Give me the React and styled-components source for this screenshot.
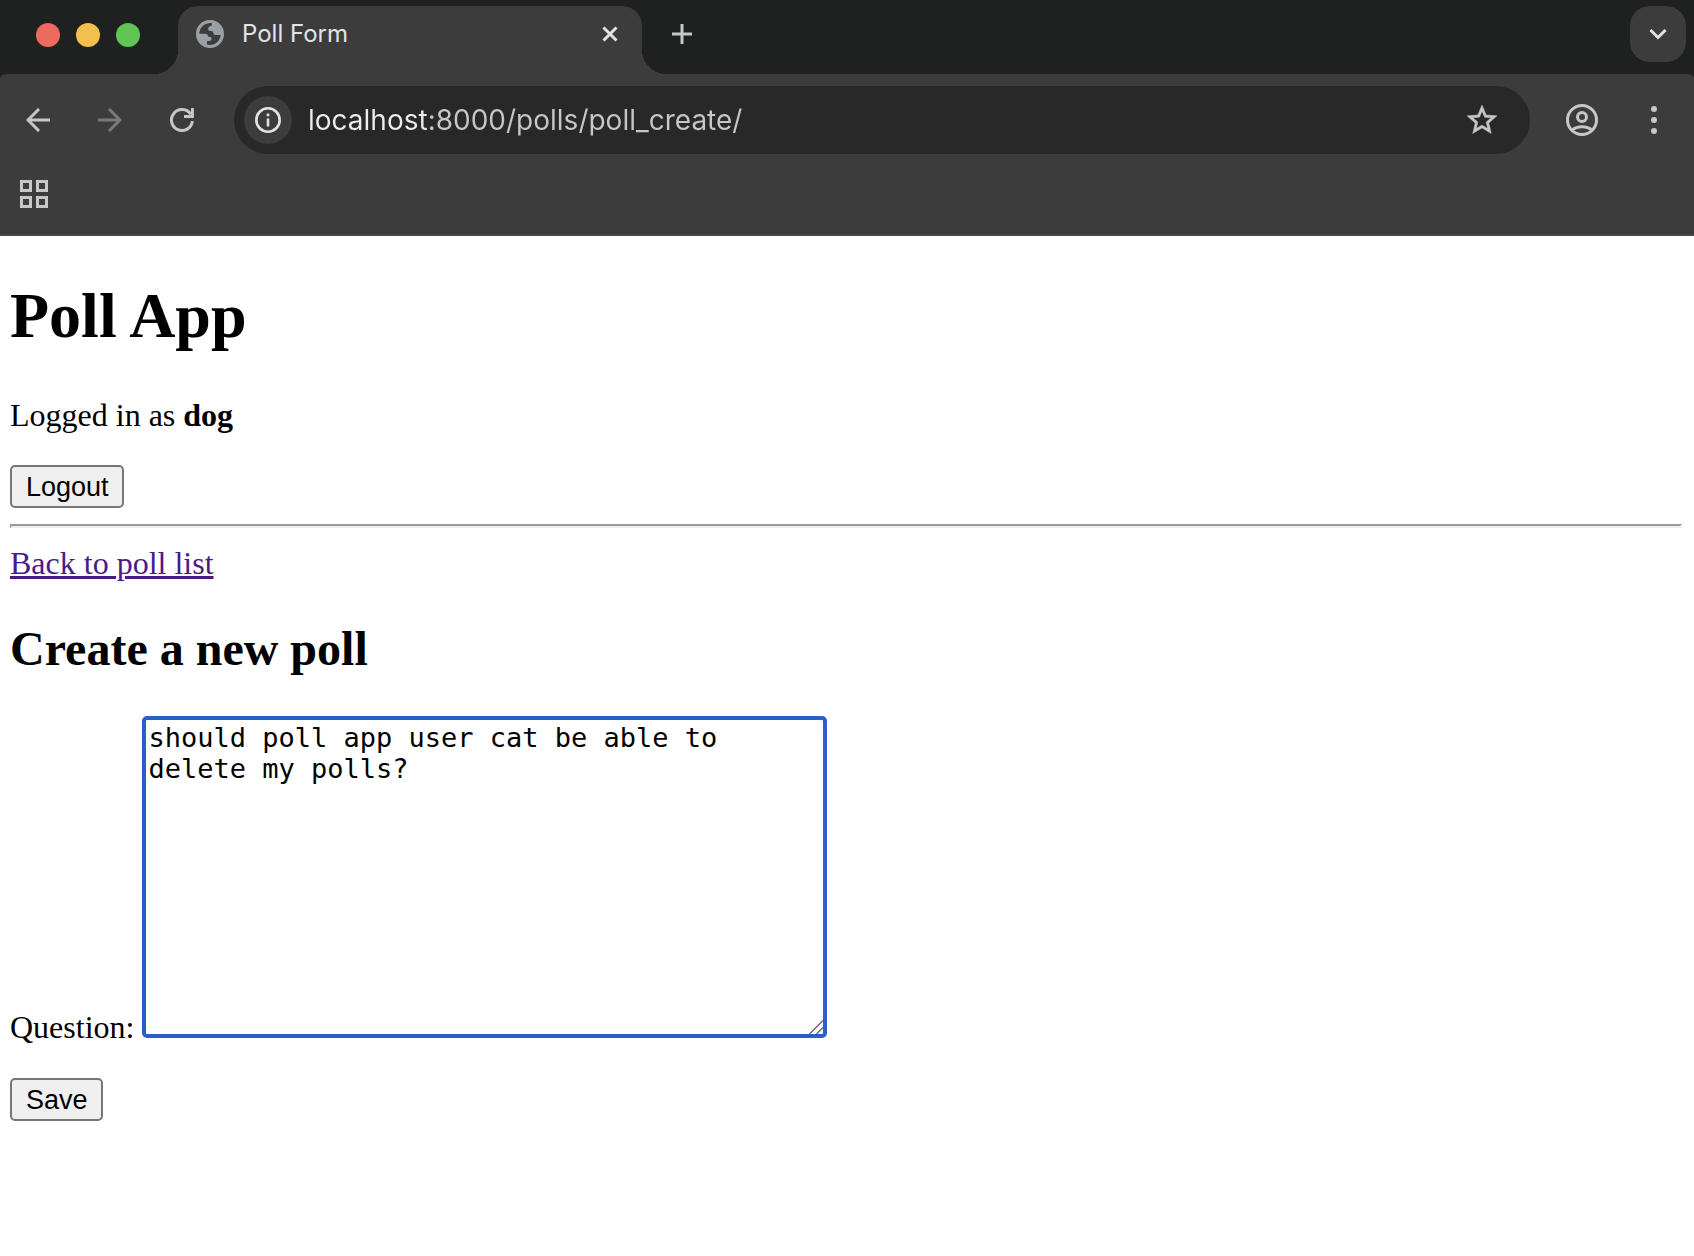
import React, { useState } from "react";
import styled, { createGlobalStyle } from "styled-components";

const color = {
  strip: "#1f2120",
  chrome: "#3c3c3c",
  field: "#282828",
  icon: "#c7c7c7",
  bright: "#e3e3e3",
};

const GlobalStyle = createGlobalStyle`
  *, *::before, *::after { box-sizing: border-box; }
  body {
    margin: 0;
    background: #fff;
    color: #000;
    font-family: "Liberation Serif", "Times New Roman", serif;
    font-size: 32px;
    line-height: 37px;
  }
`;

const TabStrip = styled.header`
  display: flex;
  align-items: flex-start;
  height: 74px;
  padding: 6px 8px 0 36px;
  background: ${color.strip};
`;

const WindowControls = styled.div`
  display: flex;
  gap: 16px;
  margin: 17px 38px 0 0;
`;

const WindowDot = styled.button`
  width: 24px;
  height: 24px;
  padding: 0;
  border: 0;
  border-radius: 50%;
  background: ${(p) => p.$fill};
`;

const Tab = styled.div`
  position: relative;
  display: flex;
  align-items: center;
  width: 464px;
  height: 68px;
  padding: 0 16px 12px 18px;
  border-radius: 20px 20px 0 0;
  background: ${color.chrome};

  &::before,
  &::after {
    content: "";
    position: absolute;
    bottom: 0;
    width: 24px;
    height: 24px;
  }
  &::before {
    right: 100%;
    background: radial-gradient(circle at 0 0, transparent 24px, ${color.chrome} 24px);
  }
  &::after {
    left: 100%;
    background: radial-gradient(circle at 100% 0, transparent 24px, ${color.chrome} 24px);
  }
`;

const TabTitle = styled.span`
  flex: 1;
  margin-left: 18px;
  padding-bottom: 1px;
  color: ${color.bright};
  font: 24px/32px Inter, sans-serif;
`;

const IconButton = styled.button`
  display: flex;
  align-items: center;
  justify-content: center;
  flex: none;
  width: ${(p) => p.$size || 56}px;
  height: ${(p) => p.$size || 56}px;
  padding: 0;
  border: 0;
  border-radius: ${(p) => p.$radius || "50%"};
  background: ${(p) => p.$fill || "transparent"};
  color: ${(p) => p.$color || color.icon};
`;

const NewTab = styled(IconButton)`
  margin-left: 12px;
`;

const TabSearch = styled(IconButton)`
  margin-left: auto;
`;

const ToolbarArea = styled.div`
  background: ${color.strip};
`;

const Toolbar = styled.nav`
  display: flex;
  align-items: center;
  gap: 16px;
  height: 92px;
  padding: 0 12px 0 10px;
  border-radius: 8px 8px 0 0 / 4px 4px 0 0;
  background: ${color.chrome};
`;

const AddressBar = styled.div`
  display: flex;
  flex: 1;
  align-items: center;
  height: 68px;
  margin: 0 8px;
  padding: 0 20px 0 10px;
  border-radius: 34px;
  background: ${color.field};
`;

const AddressInput = styled.input`
  flex: 1;
  min-width: 0;
  height: 40px;
  margin: 0 0 0 16px;
  padding: 0;
  border: 0;
  outline: 0;
  font: 28px/40px Inter, sans-serif;
  background: linear-gradient(to right, #ededed 120px, ${color.icon} 120px);
  -webkit-background-clip: text;
  background-clip: text;
  -webkit-text-fill-color: transparent;
`;

const BookmarksBar = styled.div`
  display: flex;
  height: 70px;
  padding-left: 6px;
  border-bottom: 2px solid #474545;
  background: ${color.chrome};
`;

const Page = styled.main`
  padding: 0 12px 32px 10px;
`;

const Title = styled.h1`
  margin: 43px 0 44px;
  font-size: 64px;
  line-height: 74px;
`;

const Paragraph = styled.p`
  margin: 0 0 31px;
`;

const FormButton = styled.button`
  display: block;
  height: 43px;
  padding: 0 13px 0 14px;
  border: 2px solid #767676;
  border-radius: 5px;
  background: #efefef;
  color: #000;
  font: 27px/36px "Liberation Sans", Arial, sans-serif;
`;

const Divider = styled.hr`
  height: 4px;
  margin: 16px 0 17px;
  border: 2px solid;
  border-color: #9a9a9a #eee #eee #9a9a9a;
`;

const BackLink = styled.a`
  color: #4b1a86;
  text-decoration-thickness: 3px;
  text-underline-offset: 2px;
`;

const Subtitle = styled.h2`
  margin: 39px 0 40px;
  font-size: 48px;
  line-height: 55px;
`;

const Field = styled.div`
  display: flex;
  align-items: flex-end;
  gap: 8px;
  margin-bottom: 32px;
`;

const TextAreaBox = styled.div`
  position: relative;
  width: 685px;
  margin-bottom: 8px;
`;

const TextArea = styled.textarea`
  display: block;
  width: 100%;
  height: 322px;
  margin: 0;
  padding: 2px 30px 2px 2px;
  border: 4px solid #285fc8;
  border-radius: 5px;
  outline: 0;
  resize: none;
  background: #fff;
  color: #000;
  font: 27px/31px "DejaVu Sans Mono", monospace;
`;

const ResizeGrip = styled.svg`
  position: absolute;
  right: 4px;
  bottom: 4px;
`;

const Favicon = () => (
  <svg width="28" height="28" viewBox="0 0 28 28" aria-hidden="true">
    <circle cx="14" cy="14" r="14" fill="#9aa0a6" />
    <path
      fill="#3c3c3c"
      d="M16 3.3V4.5Q16 6.300 14 6.300Q12.300 6.500 12.300 8.500V9.500Q12.300 11 14 11H15.500Q17.300 11 17.300 13Q17.300 15 19.500 15H24.700A10.800 10.800 0 0 1 11 24.500V21H13.500Q15.500 21 15.500 19V18.500Q15.500 16.800 13.500 16.800H12.300Q12 13.700 9 13.700H3.200A10.800 10.800 0 0 1 16 3.300Z"
    />
  </svg>
);

const Stroked = ({ size, width = 3, children }) => (
  <svg
    width={size}
    height={size}
    viewBox={`0 0 ${size} ${size}`}
    fill="none"
    stroke="currentColor"
    strokeWidth={width}
    aria-hidden="true"
  >
    {children}
  </svg>
);

const Arrow = ({ forward }) => (
  <Stroked size={24}>
    <path
      d={forward ? "M0 12H22M11 1L22 12L11 23" : "M24 12H2M13 1L2 12L13 23"}
    />
  </Stroked>
);

export default function App() {
  const [question, setQuestion] = useState(
    "should poll app user cat be able to delete my polls?"
  );

  return (
    <>
      <GlobalStyle />
      <TabStrip>
        <WindowControls>
          <WindowDot $fill="#ed6a5e" aria-label="Close window" />
          <WindowDot $fill="#f5bf4f" aria-label="Minimize window" />
          <WindowDot $fill="#61c554" aria-label="Zoom window" />
        </WindowControls>
        <Tab>
          <Favicon />
          <TabTitle>Poll Form</TabTitle>
          <IconButton $size={32} $color={color.bright} aria-label="Close tab">
            <Stroked size={16}>
              <path d="M1.5 1.5L14.5 14.5M14.5 1.5L1.5 14.5" />
            </Stroked>
          </IconButton>
        </Tab>
        <NewTab aria-label="New tab">
          <Stroked size={20}>
            <path d="M10 0V20M0 10H20" />
          </Stroked>
        </NewTab>
        <TabSearch $radius="20px" $fill={color.chrome} $color={color.bright} aria-label="Search tabs">
          <Stroked size={18}>
            <path d="M1.500 5L9 12.5L16.5 5" />
          </Stroked>
        </TabSearch>
      </TabStrip>

      <ToolbarArea>
        <Toolbar>
          <IconButton aria-label="Back">
            <Arrow />
          </IconButton>
          <IconButton $color="#7a7a7a" aria-label="Forward">
            <Arrow forward />
          </IconButton>
          <IconButton aria-label="Reload">
            <Stroked size={24}>
              <path d="M22.4 13.2A10.5 10.5 0 1 1 20.8 6.3" />
              <path d="M22.4 0V8.5H14" />
            </Stroked>
          </IconButton>
          <AddressBar>
            <IconButton $size={48} $fill={color.chrome} $color={color.bright} aria-label="Site information">
              <Stroked size={26}>
                <circle cx="13" cy="13" r="11.7" strokeWidth="2.6" />
                <path d="M13 11.5V19.5M13 6.5V9.3" strokeWidth="2.6" />
              </Stroked>
            </IconButton>
            <AddressInput aria-label="Address" defaultValue="localhost:8000/polls/poll_create/" />
            <IconButton aria-label="Bookmark this page">
              <svg
                width="36"
                height="36"
                viewBox="0 0 24 24"
                fill="currentColor"
                stroke="currentColor"
                strokeWidth="0.3"
                aria-hidden="true"
              >
                <path d="M22 9.24l-7.19-.62L12 2 9.19 8.63 2 9.24l5.46 4.73L5.82 21 12 17.27 18.18 21l-1.63-7.03L22 9.24zM12 15.4l-3.76 2.27 1-4.28-3.32-2.88 4.38-.38L12 6.1l1.71 4.04 4.38.38-3.32 2.88 1 4.28L12 15.4z" />
              </svg>
            </IconButton>
          </AddressBar>
          <IconButton aria-label="Profile">
            <Stroked size={32}>
              <circle cx="16" cy="16" r="14.5" />
              <circle cx="16" cy="13" r="4.5" />
              <path d="M6 26C11.5 21.5 20.5 21.5 26 26" />
            </Stroked>
          </IconButton>
          <IconButton aria-label="Menu">
            <svg width="6" height="28" viewBox="0 0 6 28" fill="currentColor" aria-hidden="true">
              <circle cx="3" cy="3" r="3" />
              <circle cx="3" cy="14" r="3" />
              <circle cx="3" cy="25" r="3" />
            </svg>
          </IconButton>
        </Toolbar>
      </ToolbarArea>
      <BookmarksBar>
        <IconButton aria-label="Apps">
          <Stroked size={28}>
            <path d="M1.5 1.5H10.5V10.5H1.5ZM17.5 1.5H26.5V10.5H17.5ZM1.5 17.5H10.5V26.5H1.5ZM17.5 17.5H26.5V26.5H17.5Z" />
          </Stroked>
        </IconButton>
      </BookmarksBar>

      <Page>
        <Title>Poll App</Title>
        <Paragraph>
          Logged in as <strong>dog</strong>
        </Paragraph>
        <FormButton type="button">Logout</FormButton>
        <Divider />
        <BackLink href="#polls">Back to poll list</BackLink>
        <Subtitle>Create a new poll</Subtitle>
        <form onSubmit={(e) => e.preventDefault()}>
          <Field>
            <label htmlFor="question">Question:</label>
            <TextAreaBox>
              <TextArea
                id="question"
                value={question}
                onChange={(e) => setQuestion(e.target.value)}
              />
              <ResizeGrip width="14" height="14" viewBox="0 0 14 14" stroke="#6b6b6b" strokeWidth="1.5" aria-hidden="true">
                <path d="M0.5 14L14 0.5M7.5 14L14 7.5" />
              </ResizeGrip>
            </TextAreaBox>
          </Field>
          <FormButton type="submit">Save</FormButton>
        </form>
      </Page>
    </>
  );
}
